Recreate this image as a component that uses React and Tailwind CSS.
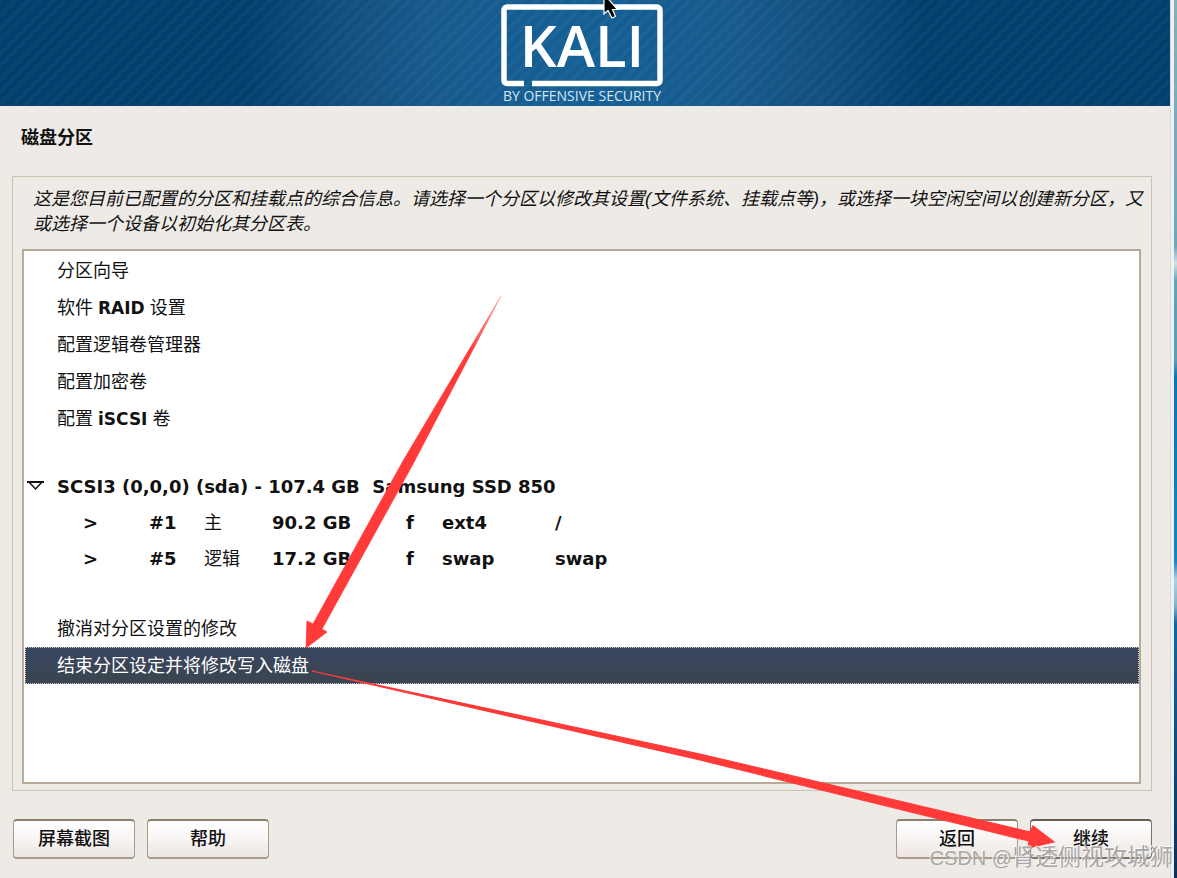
const guidedOptions = [
  ["分区向导"],
  ["软件 ", "RAID", " 设置"],
  ["配置逻辑卷管理器"],
  ["配置加密卷"],
  ["配置 ", "iSCSI", " 卷"],
]

const partitions = [
  { id: "#1", type: "主", size: "90.2 GB", flag: "f", fs: "ext4", mount: "/" },
  { id: "#5", type: "逻辑", size: "17.2 GB", flag: "f", fs: "swap", mount: "swap" },
]

const latin = "font-['DejaVu_Sans','Noto_Sans_CJK_SC',sans-serif] font-bold"

function Logo() {
  return (
    <svg width="170" height="106" viewBox="0 0 170 106" role="img" aria-label="KALI by Offensive Security">
      <path
        d="M26 83.500H9a3 3 0 0 1-3-3V10a3 3 0 0 1 3-3H159a3 3 0 0 1 3 3V80.500a3 3 0 0 1-3 3H34"
        fill="none"
        stroke="#fff"
        strokeWidth="5.500"
      />
      <text x="84" y="67" textAnchor="middle" fill="#fff" fontSize="58" fontWeight="600" fontFamily="Open Sans, Noto Sans, sans-serif">
        KALI
      </text>
      <text x="84" y="101" textAnchor="middle" fill="#d5e6f2" fontSize="14" fontFamily="Open Sans, Noto Sans, sans-serif">
        BY OFFENSIVE SECURITY
      </text>
    </svg>
  )
}

function Cursor() {
  return (
    <svg className="absolute top-0 left-[602px]" width="18" height="20" viewBox="0 0 18 20" aria-hidden="true">
      <path d="M2 -6V14L6 10.500L10 18L13.500 16.500L10.500 9.500H15.500Z" fill="#000" stroke="#fff" strokeWidth="1.200" />
    </svg>
  )
}

function Arrows() {
  return (
    <svg className="absolute top-0 left-0 pointer-events-none" width="1177" height="878" viewBox="0 0 1177 878" aria-hidden="true">
      <defs>
        <linearGradient id="tail" gradientUnits="userSpaceOnUse" x1="500" y1="296" x2="470" y2="350">
          <stop offset="0" stopColor="#ff3a38" stopOpacity="0.300" />
          <stop offset="1" stopColor="#ff3a38" />
        </linearGradient>
      </defs>
      <path d="M501 296L413 464L322 629L327 632L306 648L307 621L313 624L403 461Z" fill="url(#tail)" stroke="url(#tail)" strokeWidth="0.800" />
      <path d="M312 671L700 754L1030 832L1033 826L1054 842L1028 848L1029 841L700 760Z" fill="#ff3a38" stroke="#ff3a38" strokeWidth="1.200" />
    </svg>
  )
}

function Row({ parts, selected }) {
  return (
    <li>
      <button
        className={`block w-full h-[37px] pl-[31px] text-left border border-dotted ${
          selected ? "text-white bg-linear-to-b from-[#39455f] to-[#3a454f] border-[#c5cad3]" : "border-transparent"
        }`}
      >
        {parts.map((part, i) => (
          <span key={i} className={i === 1 ? `text-[17px] ${latin}` : "whitespace-pre"}>
            {part}
          </span>
        ))}
      </button>
    </li>
  )
}

function FooterButton({ children, primary }) {
  return (
    <button
      className={`w-[122px] h-10 rounded-sm border border-y-2 font-medium bg-linear-to-b from-white via-[#f8f5f4] to-[#ece5e2] ${
        primary ? "border-[#7d7266] border-t-[#665b50]" : "border-[#a89a88] border-t-[#8a7f6c]"
      }`}
    >
      {children}
    </button>
  )
}

export default function App() {
  return (
    <div className="relative flex min-h-screen overflow-hidden bg-[#eeebe6] text-lg/6 text-[#111] font-['Liberation_Sans','Noto_Sans_CJK_SC',sans-serif]">
      <div className="flex flex-col flex-1 min-w-0">
        <header className="flex justify-center h-[106px] pr-1 bg-[repeating-linear-gradient(135deg,#ffffff08_0_4px,transparent_4px_9px),radial-gradient(circle_at_center,#146096_0,#17598c_160px,#124f7e_240px,#023f6d_340px)]">
          <Logo />
        </header>

        <main className="flex flex-col flex-1 pt-5 pb-[19px] pl-3 pr-[18px]">
          <h1 className="pl-[9px] font-bold">磁盘分区</h1>

          <section className="flex flex-col flex-1 mt-[26px] px-[9px] pt-[10px] pb-[6px] border border-[#cdc1b2]">
            <p className="pl-[11px] -mr-2 italic leading-[25px]">
              这是您目前已配置的分区和挂载点的综合信息。请选择一个分区以修改其设置(文件系统、挂载点等)，或选择一块空闲空间以创建新分区，又或选择一个设备以初始化其分区表。
            </p>

            <div className="flex-1 mt-3 mr-px pt-px pl-px bg-white border-2 border-[#b9aa99]">
              <ul>
                {guidedOptions.map((parts) => (
                  <Row key={parts.join("")} parts={parts} />
                ))}
              </ul>

              <div className="mt-8 mb-[33px]">
                <button className={`flex items-center h-9 text-lg/6 ${latin}`}>
                  <svg className="mr-3" width="20" height="12" viewBox="0 0 20 12" aria-hidden="true">
                    <path d="M4 1H17L10.500 8Z" fill="#fff" stroke="#111" strokeWidth="1.500" />
                    <path d="M2 1H19" stroke="#111" strokeWidth="2" />
                  </svg>
                  <span className="whitespace-pre">SCSI3 (0,0,0) (sda) - 107.4 GB  Samsung SSD 850</span>
                </button>
                <table className={`ml-[58px] text-left text-lg/6 ${latin}`}>
                  <tbody>
                    {partitions.map((p) => (
                      <tr key={p.id} className="h-9">
                        <td className="w-[66px]">&gt;</td>
                        <td className="w-[55px]">{p.id}</td>
                        <td className="w-[68px] font-normal">{p.type}</td>
                        <td className="w-[134px]">{p.size}</td>
                        <td className="w-9">{p.flag}</td>
                        <td className="w-[113px]">{p.fs}</td>
                        <td>{p.mount}</td>
                      </tr>
                    ))}
                  </tbody>
                </table>
              </div>

              <ul>
                <Row parts={["撤消对分区设置的修改"]} />
                <Row parts={["结束分区设定并将修改写入磁盘"]} selected />
              </ul>
            </div>
          </section>

          <footer className="flex gap-3 mt-7 pl-px">
            <FooterButton>屏幕截图</FooterButton>
            <FooterButton>帮助</FooterButton>
            <div className="flex-1" />
            <FooterButton>返回</FooterButton>
            <FooterButton primary>继续</FooterButton>
          </footer>
        </main>
      </div>

      <div className="w-1 border-l border-[#d5dce0] bg-[#eef0f1]" />
      <div className="w-[3px] bg-[linear-gradient(#86aebf_0,#6fa5bb_28%,#d5e0e4_30%,#5fa3b8_32%,#55a0bb_41%,#0a74bb_43%,#1b82c4_64%,#a9d3e2_66%,#7fb4cc_69%,#0f68a8_71%,#0a2f58_100%)]" />

      <Cursor />
      <Arrows />
      <div className="absolute bottom-1 right-1 text-[23px]/8 whitespace-nowrap text-[#a9a7a5] [text-shadow:-1px_-1px_0_#ffffffcc]">
        <span className="text-xl/8">CSDN @</span>肾透侧视攻城狮
      </div>
    </div>
  )
}
